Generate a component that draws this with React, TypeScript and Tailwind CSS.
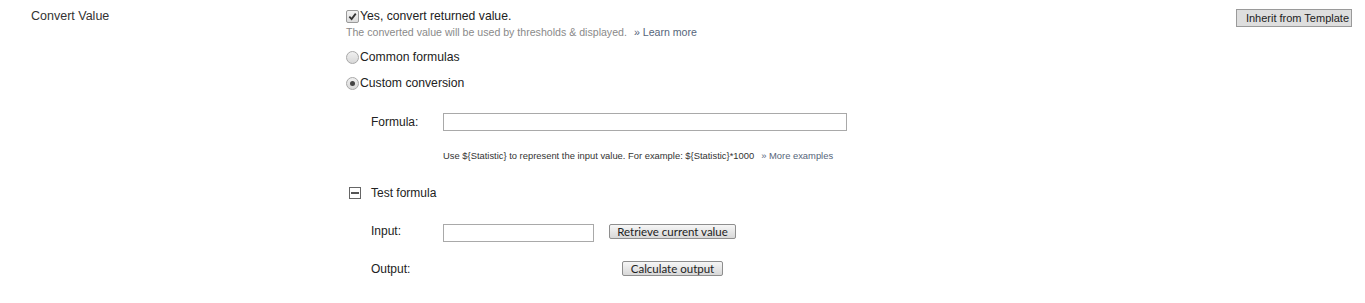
import React from "react"

const Checkbox = () => (
  <span className="mr-px inline-flex h-[13px] w-[13px] items-center justify-center rounded-[2px] border border-[#9a9a9a] bg-gradient-to-b from-[#f4f4f4] to-[#dcdcdc]">
    <svg viewBox="0 0 10 10" className="h-[9px] w-[9px]">
      <path d="M1.5 5.2 L4 7.8 L8.6 1.8" fill="none" stroke="#333" strokeWidth="2" />
    </svg>
  </span>
)

const Radio = ({ checked }: { checked?: boolean }) => (
  <span className="mr-px inline-flex h-[13px] w-[13px] items-center justify-center rounded-full border border-[#a8a8a8] bg-gradient-to-b from-[#f0f0f0] to-[#d8d8d8]">
    {checked && <span className="h-[5px] w-[5px] rounded-full bg-[#444]" />}
  </span>
)

const GrayButton = ({ children, width }: { children: React.ReactNode; width: string }) => (
  <button
    className={`flex h-[15px] items-center justify-center whitespace-nowrap rounded-[2px] border border-[#8e8e8e] bg-gradient-to-b from-[#f6f6f6] to-[#d8d8d8] font-['Lato',sans-serif] text-[11.5px] leading-[13px] text-[#222] ${width}`}
  >
    {children}
  </button>
)

export default function App() {
  const rowLabel = "w-[72px] text-[12px] leading-[14px] text-[#222]"

  return (
    <div className="flex h-[303px] w-[1365px] bg-white font-['Liberation_Sans',Arial,sans-serif] leading-none text-[#222]">
      <div className="w-[346px] shrink-0 pl-[31px] pt-[9px] text-[12.5px] leading-[14px] text-[#333]">
        Convert Value
      </div>

      <div className="flex flex-1 flex-col pt-[9px]">
        <label className="flex h-[15px] items-center text-[12.2px] leading-[15px] text-[#222]">
          <Checkbox />
          Yes, convert returned value.
        </label>
        <div className="mt-[2px] whitespace-nowrap text-[10.6px] leading-[13px] text-[#8a8a8a]">
          The converted value will be used by thresholds &amp; displayed.
          <span className="ml-[7px] text-[#56657a]">» Learn more</span>
        </div>

        <label className="mt-[11px] flex h-[15px] items-center text-[12.2px] leading-[15px]">
          <Radio />
          Common formulas
        </label>
        <label className="mt-[11px] flex h-[15px] items-center text-[12.2px] leading-[15px]">
          <Radio checked />
          Custom conversion
        </label>

        <div className="ml-[25px] mt-[22px] flex items-center">
          <div className={rowLabel}>Formula:</div>
          <input className="h-[18px] w-[404px] border border-[#a9a9a9] bg-white" />
        </div>

        <div className="ml-[97px] mt-[19px] whitespace-nowrap text-[9.4px] leading-[12px] text-[#333]">
          Use ${"{Statistic}"} to represent the input value. For example: ${"{Statistic}"}*1000
          <span className="ml-[7px] text-[#56657a]">» More examples</span>
        </div>

        <div className="ml-[3px] mt-[24px] flex h-[14px] items-center">
          <span className="flex h-[12px] w-[12px] items-center justify-center border border-[#666]">
            <span className="h-[2px] w-[8px] bg-[#555]" />
          </span>
          <span className="ml-[10px] text-[12px] leading-[14px] text-[#222]">Test formula</span>
        </div>

        <div className="ml-[25px] mt-[24px] flex items-start">
          <div className={rowLabel}>Input:</div>
          <input className="h-[18px] w-[151px] border border-[#a9a9a9] bg-white" />
          <div className="ml-[15px] flex w-[127px] justify-center">
            <GrayButton width="w-[127px]">Retrieve current value</GrayButton>
          </div>
        </div>

        <div className="ml-[25px] mt-[19px] flex items-center">
          <div className={rowLabel}>Output:</div>
          <div className="ml-[166px] flex w-[127px] justify-center">
            <GrayButton width="w-[101px]">Calculate output</GrayButton>
          </div>
        </div>
      </div>

      <div className="flex items-start pr-[13px] pt-[9px]">
        <button className="flex h-[18px] w-[116px] items-center justify-end whitespace-nowrap border border-[#9a9a9a] bg-[#dedede] pr-[2px] text-[11px] leading-[16px] text-[#222]">
          Inherit from Template
        </button>
      </div>
    </div>
  )
}
